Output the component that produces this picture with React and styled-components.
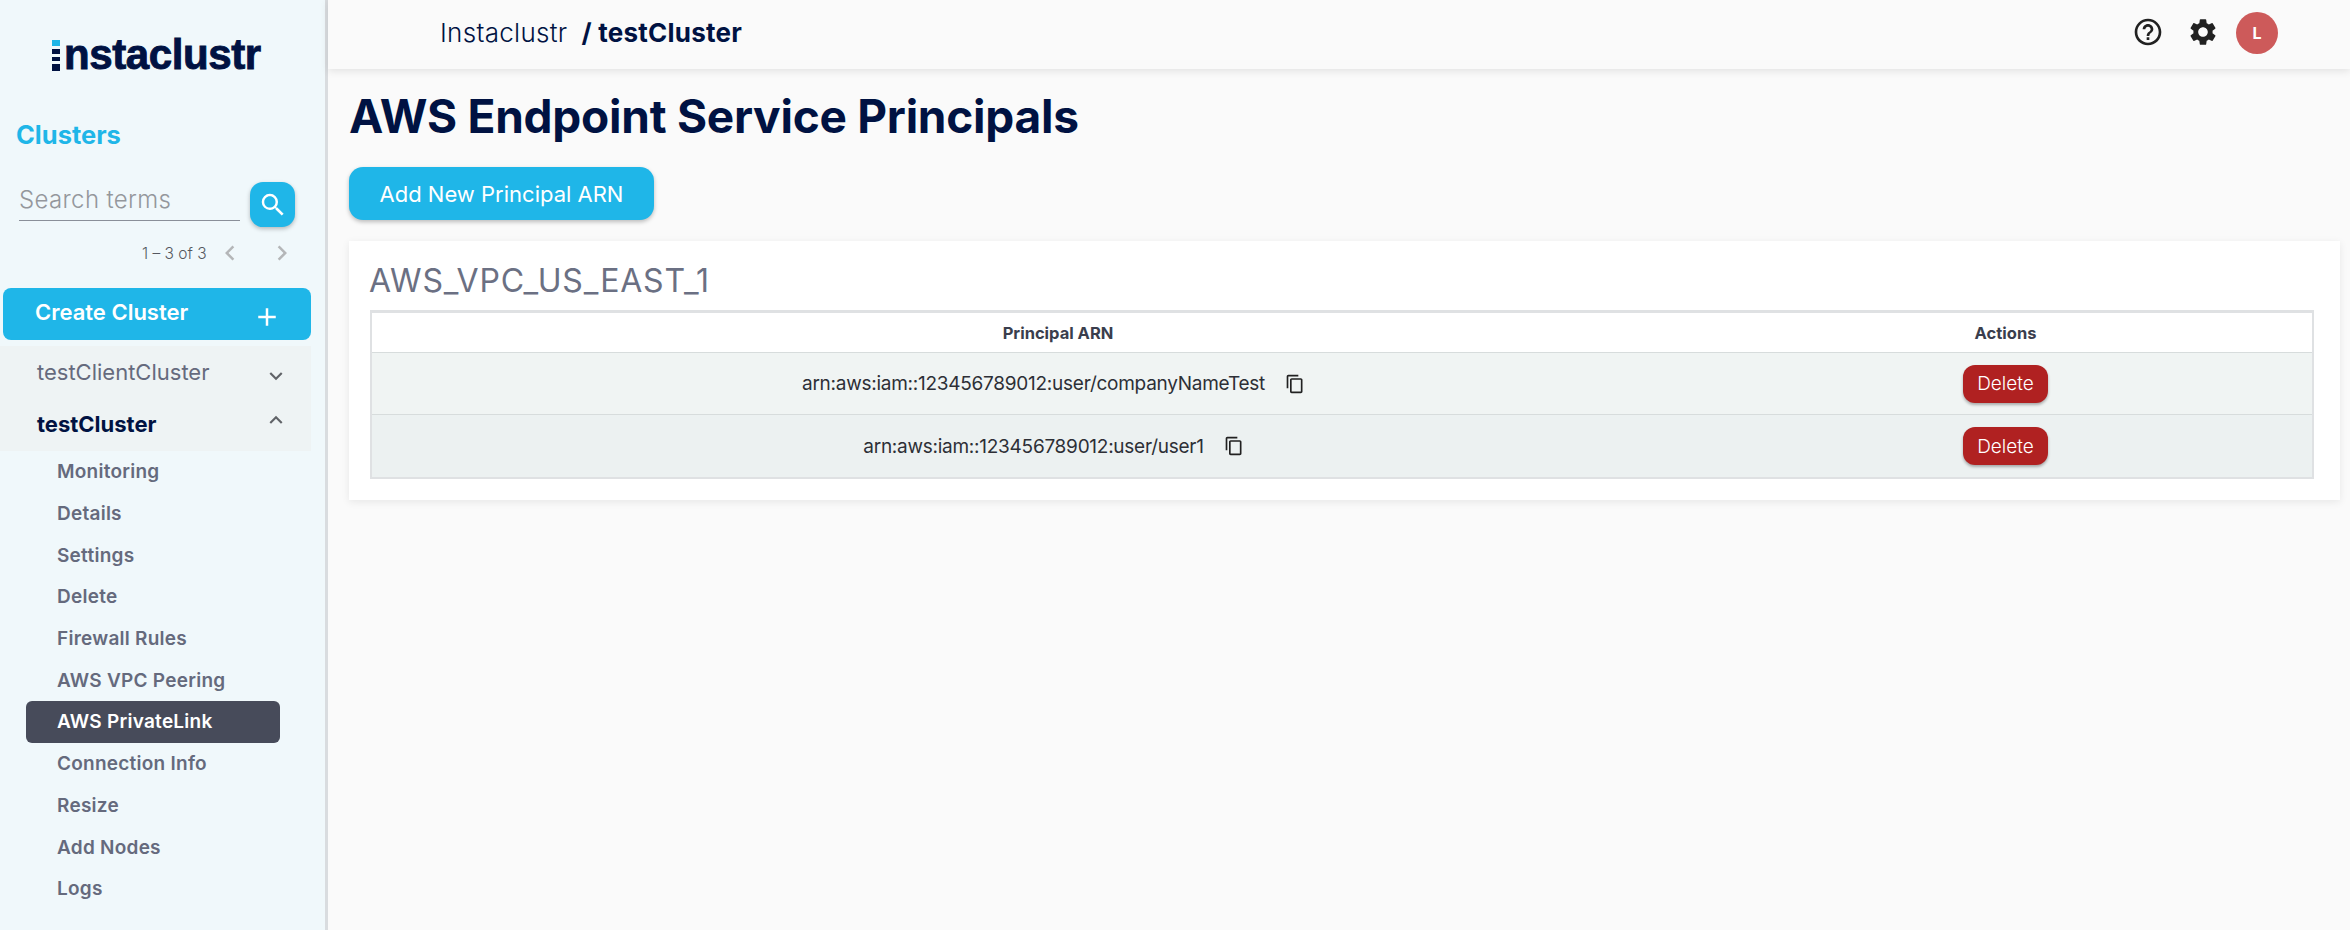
import React from "react";
import styled, { createGlobalStyle } from "styled-components";
import { MdAdd, MdChevronLeft, MdChevronRight, MdContentCopy, MdExpandLess, MdExpandMore, MdHelpOutline, MdSearch, MdSettings } from "react-icons/md";

const Global = createGlobalStyle`
  html, body { margin: 0; padding: 0; height: 100%; overflow: hidden; background: #fafafa; }
  body { font-family: Inter, "Liberation Sans", sans-serif; color: #001242; }
  * { box-sizing: border-box; }
`;

const Page = styled.div`display: flex; width: 2350px; height: 930px; overflow: hidden;`;

const Sidebar = styled.aside`
  width: 328px; flex: none; height: 930px; background: #f0f8fb;
  border-right: 3px solid #d9dcdf; padding-top: 40px;
`;
const LogoWrap = styled.div`display: flex; align-items: flex-end; height: 32px; padding-left: 52px; gap: 4px;`;
const LogoMark = styled.div`display: flex; flex-direction: column; gap: 3px; width: 8px; margin-bottom: 1px;`;
const LogoDot = styled.span`display: block; height: ${p => p.$h}px; background: ${p => p.$c};`;
const LogoText = styled.span`
  font-family: "Liberation Sans", Arial, sans-serif; font-weight: 700; font-size: 42px; line-height: 32px;
  letter-spacing: -0.4px; color: #001242; -webkit-text-stroke: 0.9px #001242; transform: translateY(-1px);
`;
const SideTitle = styled.div`
  margin: 48px 0 0 16px; font-size: 25.5px; line-height: 30px; font-weight: 700; color: #1fb6e8;
`;
const SearchRow = styled.div`display: flex; align-items: flex-end; margin: 32px 0 0 19px; gap: 10px;`;
const SearchField = styled.div`
  width: 221px; height: 38px; border-bottom: 1px solid #8a8f99; color: #94979c;
  font-size: 24px; font-weight: 300; line-height: 33px; letter-spacing: 0.35px;
`;
const SearchBtn = styled.button`
  width: 45px; height: 45px; border: 0; padding: 0; border-radius: 13px; background: #1fb6e8; color: #fff;
  display: flex; align-items: center; justify-content: center; box-shadow: 0 2px 4px rgba(0,0,0,.25); margin-bottom: -6px;
`;
const Pager = styled.div`
  display: flex; align-items: center; height: 28px; margin: 18px 0 0 142px; font-size: 15.5px; font-weight: 300; color: #55585f;
`;
const PagerText = styled.span`width: 73px;`;
const PagerArrow = styled.span`display: flex; color: #b4b6b8; width: ${p => p.$w}px;`;
const CreateBtn = styled.div`
  margin: 21px 0 0 3px; width: 308px; height: 52px; border-radius: 8px; background: #1fb6e8; color: #fff;
  display: flex; align-items: center; justify-content: space-between; padding: 0 29px 4px 32px;
  font-size: 22px; font-weight: 600;
`;
const CreatePlus = styled.span`display: flex; transform: translateY(5px);`;
const ClusterGroup = styled.div`margin-top: 6px; width: 311px; height: 105px; background: #eef3f4;`;
const ClusterRow = styled.div`
  display: flex; align-items: center; justify-content: space-between; height: 52px; padding: 0 22px 0 37px;
  font-size: 22px; font-weight: ${p => (p.$open ? 700 : 400)}; color: ${p => (p.$open ? "#001242" : "#656a7d")};
`;
const ClusterIcon = styled.span`display: flex; color: #606368; transform: translateY(${p => p.$dy}px);`;
const SubList = styled.div`display: flex; flex-direction: column; margin: 0 0 0 26px; width: 254px;`;
const SubItem = styled.div`
  height: 41.7px; display: flex; align-items: center; padding-left: 31px; border-radius: 6px;
  font-size: 19px; font-weight: 600; letter-spacing: 0.25px;
  color: ${p => (p.$active ? "#fff" : "#656a7d")}; background: ${p => (p.$active ? "#474b5a" : "transparent")};
`;

const Main = styled.main`flex: 1; min-width: 0; background: #fafafa; display: flex; flex-direction: column;`;
const Header = styled.header`
  height: 69px; flex: none; display: flex; align-items: center; padding: 0 0 4px 112px; background: #fafafa;
  box-shadow: 0 2px 8px rgba(0,0,0,.1); font-size: 26px; color: #001242;
`;
const Crumb = styled.span`font-weight: 300; letter-spacing: 0.3px;`;
const CrumbBold = styled.span`margin-left: 14px; font-weight: 700; letter-spacing: 0.25px;`;
const HeaderTools = styled.div`margin-left: auto; display: flex; align-items: center; padding-right: 72px; color: #212121;`;
const ToolIcon = styled.span`display: flex; margin-right: ${p => p.$m}px; transform: translateY(-1px);`;
const Avatar = styled.span`
  width: 42px; height: 42px; border-radius: 50%; background: #cd5a5a; color: #fff;
  display: flex; align-items: center; justify-content: center; font-size: 16px; font-weight: 700;
`;
const Content = styled.div`padding: 0 10px 0 21px;`;
const Title = styled.h1`margin: 21px 0 0; font-size: 46px; line-height: 52px; font-weight: 700; color: #001242; letter-spacing: -0.25px;`;
const AddBtn = styled.button`
  margin-top: 25px; display: block; width: 305px; height: 53px; border: 0; border-radius: 14px; background: #1fb6e8;
  color: #fff; font: 400 22px Inter, sans-serif; box-shadow: 0 2px 4px rgba(0,0,0,.25);
`;
const Card = styled.section`
  margin-top: 21px; height: 259px; background: #fff; box-shadow: 0 2px 8px rgba(0,0,0,.08); padding: 19px 26px 0 21px;
`;
const CardTitle = styled.h2`margin: 0 0 0 -1px; height: 50px; font-size: 32px; line-height: 42px; font-weight: 400; color: #6b7083; letter-spacing: 0.8px;`;
const Table = styled.div`border: 2px solid #dfe1e3; border-top-width: 3px; border-bottom-width: 2px;`;
const Row = styled.div`
  display: grid; grid-template-columns: 1327px 1fr; align-items: center; height: ${p => p.$h}px;
  background: ${p => p.$bg}; border-bottom: ${p => (p.$last ? "0" : "1px solid #d7dcdc")};
`;
const HeadCell = styled.div`text-align: center; font-size: 16.5px; font-weight: 700; color: #3a3e4d; padding-left: ${p => p.$pad || 0}px;`;
const Cell = styled.div`
  display: flex; justify-content: center; align-items: center; font-size: 19px; color: #2d2f36; letter-spacing: -0.26px; padding-left: ${p => p.$pad || 0}px;
`;
const CopyIcon = styled.span`display: flex; margin-left: 20px; color: #212121;`;
const DeleteBtn = styled.button`
  width: 85px; height: 38px; border: 0; border-radius: 12px; background: #b02121; color: #fff;
  font: 300 19px Inter, sans-serif; box-shadow: 0 2px 3px rgba(0,0,0,.3);
`;

const items = ["Monitoring", "Details", "Settings", "Delete", "Firewall Rules", "AWS VPC Peering", "AWS PrivateLink", "Connection Info", "Resize", "Add Nodes", "Logs"];
const rows = [
  { arn: "arn:aws:iam::123456789012:user/companyNameTest", bg: "#f0f4f3", h: 62 },
  { arn: "arn:aws:iam::123456789012:user/user1", bg: "#ecf1f1", h: 62, last: true },
];

export default function App() {
  return (
    <Page>
      <Global />
      <Sidebar>
        <LogoWrap>
          <LogoMark>
            <LogoDot $h={6} $c="#1fb6e8" />
            <LogoDot $h={5} $c="#001242" />
            <LogoDot $h={4} $c="#001242" />
            <LogoDot $h={7} $c="#001242" />
          </LogoMark>
          <LogoText>nstaclustr</LogoText>
        </LogoWrap>
        <SideTitle>Clusters</SideTitle>
        <SearchRow>
          <SearchField>Search terms</SearchField>
          <SearchBtn><MdSearch size={30} /></SearchBtn>
        </SearchRow>
        <Pager>
          <PagerText>1 – 3 of 3</PagerText>
          <PagerArrow $w={52}><MdChevronLeft size={30} /></PagerArrow>
          <PagerArrow $w={30}><MdChevronRight size={30} /></PagerArrow>
        </Pager>
        <CreateBtn>Create Cluster<CreatePlus><MdAdd size={30} /></CreatePlus></CreateBtn>
        <ClusterGroup>
          <ClusterRow>testClientCluster<ClusterIcon $dy={4}><MdExpandMore size={26} /></ClusterIcon></ClusterRow>
          <ClusterRow $open>testCluster<ClusterIcon $dy={-4}><MdExpandLess size={26} /></ClusterIcon></ClusterRow>
        </ClusterGroup>
        <SubList>
          {items.map(i => <SubItem key={i} $active={i === "AWS PrivateLink"}>{i}</SubItem>)}
        </SubList>
      </Sidebar>
      <Main>
        <Header>
          <Crumb>Instaclustr</Crumb>
          <CrumbBold>/ testCluster</CrumbBold>
          <HeaderTools>
            <ToolIcon $m={23}><MdHelpOutline size={32} /></ToolIcon>
            <ToolIcon $m={17}><MdSettings size={32} /></ToolIcon>
            <Avatar>L</Avatar>
          </HeaderTools>
        </Header>
        <Content>
          <Title>AWS Endpoint Service Principals</Title>
          <AddBtn>Add New Principal ARN</AddBtn>
          <Card>
            <CardTitle>AWS_VPC_US_EAST_1</CardTitle>
            <Table>
              <Row $h={40} $bg="#fff">
                <HeadCell $pad={45}>Principal ARN</HeadCell>
                <HeadCell>Actions</HeadCell>
              </Row>
              {rows.map(r => (
                <Row key={r.arn} $h={r.h} $bg={r.bg} $last={r.last}>
                  <Cell $pad={36}>{r.arn}<CopyIcon><MdContentCopy size={20} /></CopyIcon></Cell>
                  <Cell><DeleteBtn>Delete</DeleteBtn></Cell>
                </Row>
              ))}
            </Table>
          </Card>
        </Content>
      </Main>
    </Page>
  );
}
